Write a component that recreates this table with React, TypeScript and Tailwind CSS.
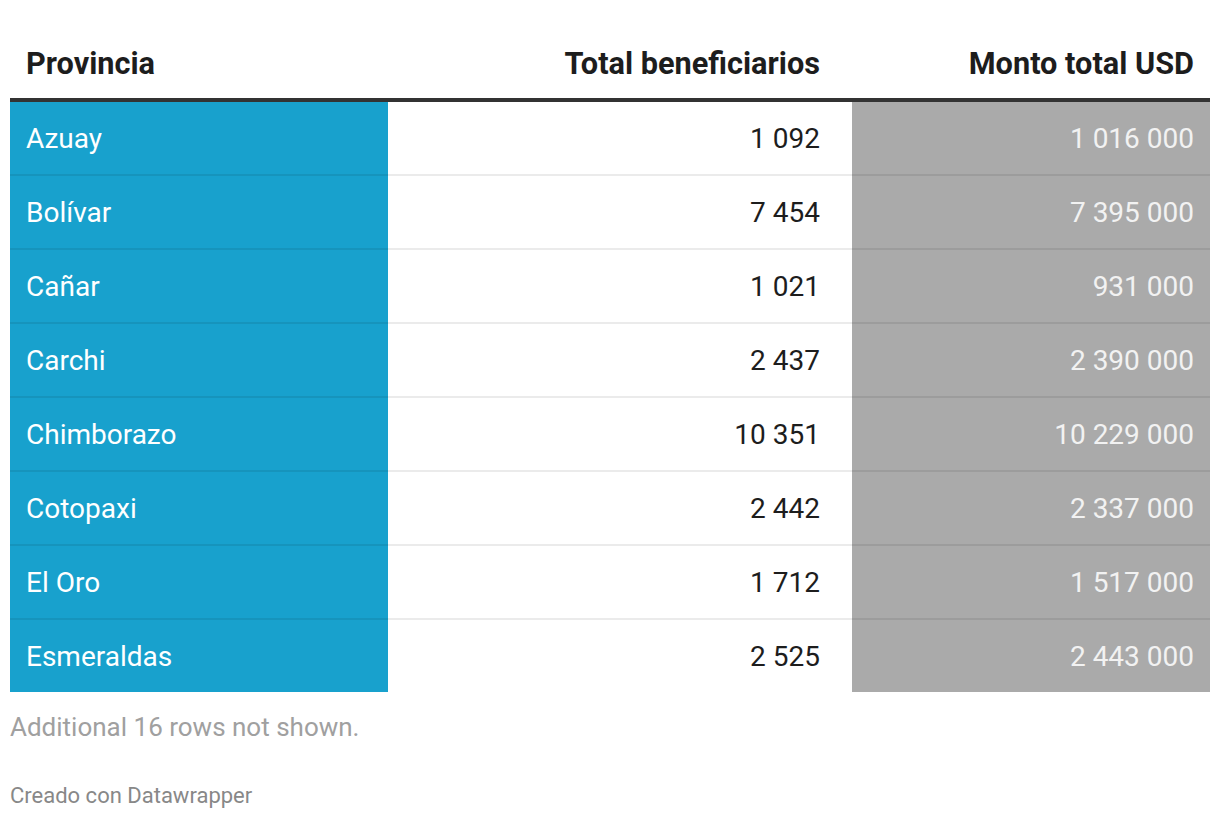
const rows = [
  ['Azuay', '1 092', '1 016 000'],
  ['Bolívar', '7 454', '7 395 000'],
  ['Cañar', '1 021', '931 000'],
  ['Carchi', '2 437', '2 390 000'],
  ['Chimborazo', '10 351', '10 229 000'],
  ['Cotopaxi', '2 442', '2 337 000'],
  ['El Oro', '1 712', '1 517 000'],
  ['Esmeraldas', '2 525', '2 443 000'],
]

export default function App() {
  return (
    <div className="min-h-screen bg-white px-[10px] font-['Roboto','Liberation_Sans',sans-serif]">
      <div className="grid grid-cols-[378px_464px_358px]">
        {/* header */}
        <div className="flex h-[98px] items-end pb-[16px] pl-4 text-[30.7px] font-bold leading-[36px] text-[#1d1d1d]">
          Provincia
        </div>
        <div className="flex h-[98px] items-end justify-end pb-[16px] pr-8 text-[30.7px] font-bold leading-[36px] text-[#1d1d1d]">
          Total beneficiarios
        </div>
        <div className="flex h-[98px] items-end justify-end pb-[16px] pr-4 text-[30.7px] font-bold leading-[36px] text-[#1d1d1d]">
          Monto total USD
        </div>
        <div className="col-span-3 h-1 bg-[#333333]" />

        {rows.map((r, i) => {
          const last = i === rows.length - 1
          const cell = last ? 'h-[72px]' : 'h-[74px] border-b-2 border-black/[0.08]'
          return (
            <div key={r[0]} className="contents">
              <div className={`flex items-center bg-[#18a1cd] pl-4 pt-[2px] text-[28px] text-white ${cell}`}>
                {r[0]}
              </div>
              <div className={`flex items-center justify-end bg-white pr-8 pt-[2px] text-[28px] text-[#1d1d1d] ${cell}`}>
                {r[1]}
              </div>
              <div className={`flex items-center justify-end bg-[#aaaaaa] pr-4 pt-[2px] text-[28px] text-[#f2f2f2] ${cell}`}>
                {r[2]}
              </div>
            </div>
          )
        })}
      </div>

      <p className="mt-[19px] text-[26px] leading-[32px] text-[#a0a0a0]">Additional 16 rows not shown.</p>
      <p className="mt-[40px] text-[22px] leading-[26px] text-[#888888]">Creado con Datawrapper</p>
    </div>
  )
}
